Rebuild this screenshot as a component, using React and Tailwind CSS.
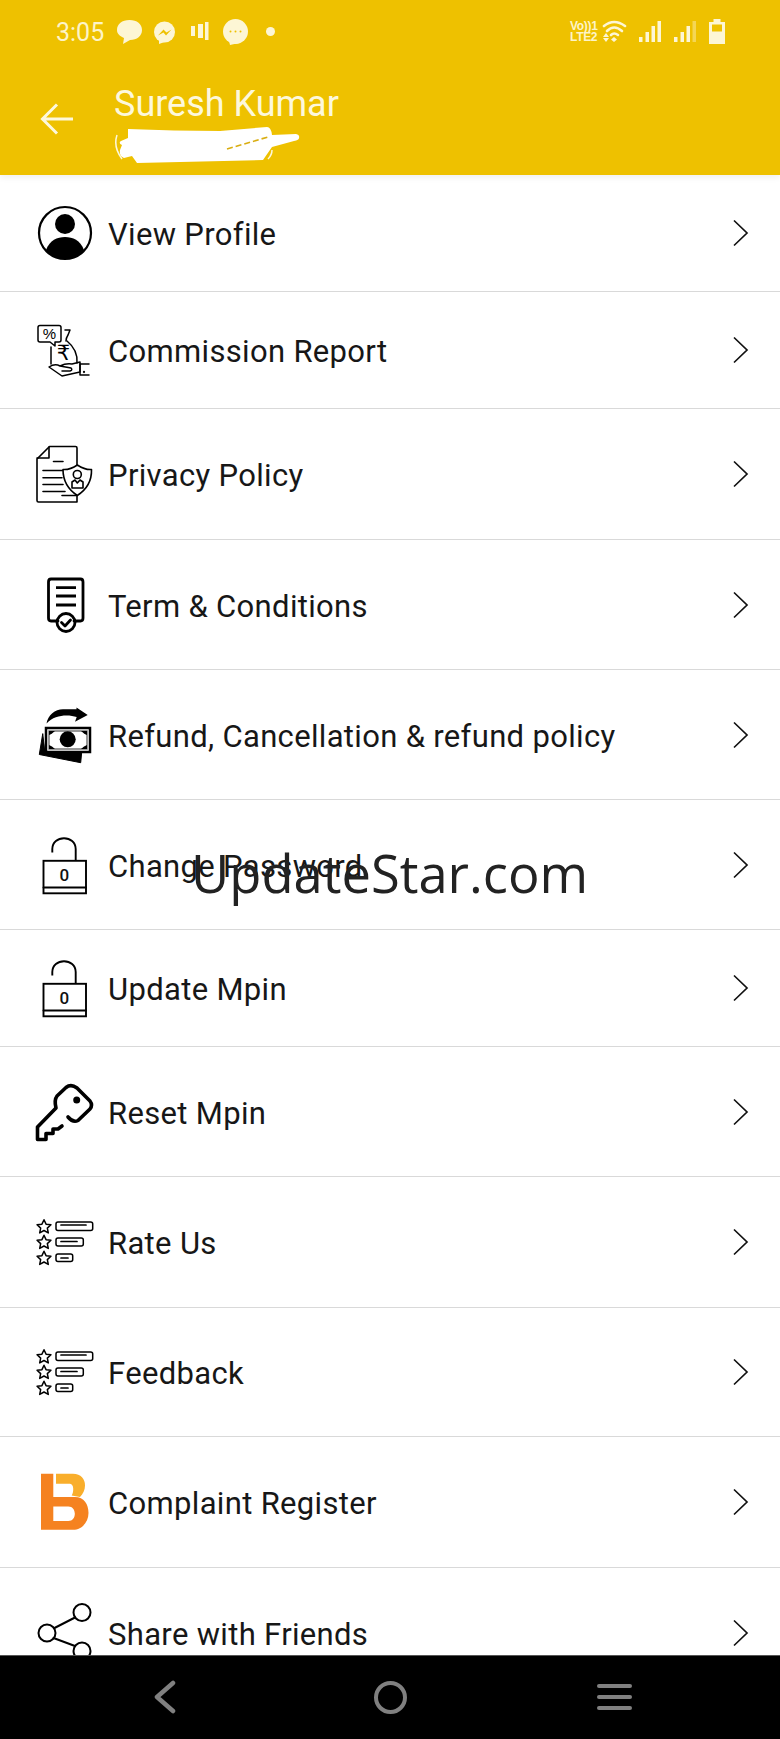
import React from "react";

const Icon = ({ children }) => (
  <svg width="60" height="60" viewBox="0 0 60 60" fill="none" stroke="#000" strokeLinecap="round" strokeLinejoin="round" className="shrink-0 overflow-visible">
    {children}
  </svg>
);

const Profile = () => (
  <Icon>
    <circle cx="30" cy="30" r="26" strokeWidth="2.2" />
    <circle cx="30" cy="21" r="10" fill="#000" stroke="none" />
    <path d="M11 47 C15 37 22 34 30 34 C38 34 45 37 49 47 C44 53 37 56 30 56 C23 56 16 53 11 47 Z" fill="#000" stroke="none" />
  </Icon>
);

const Commission = () => (
  <Icon>
    <g strokeWidth="1.5">
      <path d="M5 5.5 H24 Q26 5.5 26 7.5 V20 Q26 22 24 22 H20 V26 L15 22 H5 Q3 22 3 20 V7.5 Q3 5.5 5 5.5 Z" />
      <text x="14.5" y="19" fontSize="15" fontFamily="Liberation Sans" fill="#000" stroke="none" textAnchor="middle">%</text>
      <path d="M30 10 H35 L33 15 Q31 18 31 21" />
      <path d="M16 27 V44 M32 21 Q43 30 42 43" />
      <text x="28.5" y="40" fontSize="21" fontFamily="DejaVu Sans" fill="#000" stroke="none" textAnchor="middle">₹</text>
      <path d="M25 46 Q31 43 37 44 L45 42 V52 L27 56 L14 47 Q20 43 25 46 L36 48 Q38 50 35 51 H27" />
      <path d="M45 44 H54 M45 55 H54 M45 44 V55" />
      <circle cx="49" cy="52" r="0.4" />
    </g>
  </Icon>
);

const Privacy = () => (
  <Icon>
    <g strokeWidth="1.6">
      <path d="M27 51.5 H42 V58 H3.5 Q2 58 2 56.5 V15 L14.5 2.5 H40.5 Q42 2.5 42 4 V21" />
      <path d="M14 3 V14 H2" />
      <path d="M18.5 17.5 H28 M8 26.5 H28 M8 33.8 H27 M8 40.5 H28 M8 47.5 H30" />
      <path d="M42.3 21 Q50 26 56.5 25.5 Q57 42 42.3 51.5 Q28 42 28 25.5 Q35 26 42.3 21 Z" fill="#fff" />
      <circle cx="42.3" cy="30.5" r="4" />
      <path d="M37 44 V38 L40 36 L42.3 39 L45 36 L48 38 V44 Z" />
    </g>
  </Icon>
);

const Term = () => (
  <Icon>
    <path d="M23 46 H16 Q13.5 46 13.5 43 V7 Q13.5 4 16 4 H45.5 Q48 4 48 7 V43 Q48 46 45.5 46 H39" strokeWidth="2.8" />
    <path d="M21 12.7 H41 M21 21 H41 M21 30 H41" strokeWidth="2.8" strokeLinecap="butt" />
    <circle cx="31" cy="47.5" r="9" strokeWidth="2.8" />
    <path d="M26.5 47.5 L30 51 L35.5 45" strokeWidth="2.8" />
  </Icon>
);

const Refund = () => (
  <Icon>
    <path d="M7.7 29 L4.3 49.5 L45.7 57.7 L46.7 47 L10 45.5 Z" fill="#000" stroke="#000" strokeWidth="1" />
    <rect x="11" y="23" width="44" height="24" fill="#fff" strokeWidth="2.5" strokeLinejoin="miter" />
    <rect x="14" y="26" width="38" height="18" fill="none" stroke="#777" strokeWidth="1.5" strokeLinejoin="miter" />
    <path d="M14 26 H20 Q17 29 14 30 Z M52 26 H46 Q49 29 52 30 Z M14 44 H20 Q17 41 14 40 Z M52 44 H46 Q49 41 52 40 Z" fill="#000" stroke="none" />
    <circle cx="32.7" cy="34.3" r="8" fill="#000" stroke="none" />
    <path d="M11.5 18.5 C13 10 20 4.5 28 4.3 L41.5 4.3 L41.5 2.5 L52.7 10 L40 16.7 L41.7 12 C34 9.5 20 9 11.5 18.5 Z" fill="#000" stroke="none" />
  </Icon>
);

const Lock = () => (
  <Icon>
    <path d="M17.3 17.5 V14 C17.3 7 23 3.2 29 3.2 C35 3.2 40.7 7 40.7 14 V25.8" strokeWidth="1.9" strokeLinecap="butt" />
    <rect x="8.5" y="25.8" width="42.5" height="32.5" strokeWidth="1.9" strokeLinejoin="miter" />
    <path d="M8.5 52.5 H51" strokeWidth="1.9" />
    <text x="29.3" y="46" fontSize="17" fontFamily="Roboto" fontWeight="500" fill="#111" stroke="none" textAnchor="middle">0</text>
  </Icon>
);

const Key = () => (
  <Icon>
    <path d="M33 35 Q38 41 43 38.5 L55 27 Q58 23 55 19 L42 6 Q36 1.5 31 5.5 L22 14 Q19 18 21 26 L2.5 45 V57.5 H11 V51.5 H18 V47 H23 L27 44" strokeWidth="3.6" />
    <circle cx="41.7" cy="18" r="3.5" fill="#000" stroke="none" />
  </Icon>
);

const starPath = (cx, cy, r = 7.3) => {
  const pts = [];
  for (let i = 0; i < 10; i++) {
    const a = -Math.PI / 2 + (i * Math.PI) / 5;
    const rr = i % 2 ? r * 0.48 : r;
    pts.push(`${(cx + rr * Math.cos(a)).toFixed(2)} ${(cy + rr * Math.sin(a)).toFixed(2)}`);
  }
  return "M" + pts.join(" L") + " Z";
};

const Stars = () => (
  <Icon>
    <g strokeWidth="1.5">
      <path d={starPath(9, 15)} />
      <path d={starPath(9, 30.5)} />
      <path d={starPath(9, 46.5)} />
      <rect x="21" y="10" width="36.7" height="8.5" rx="2" />
      <rect x="21" y="26" width="27.3" height="8" rx="2" />
      <rect x="21" y="42" width="16.7" height="7.5" rx="2" />
      <path d="M26 13 H51 M26 29.5 H42 M26 46 H33" strokeWidth="1.7" />
    </g>
  </Icon>
);

const Logo = () => (
  <Icon>
    <path d="M21 1.8 H38 C46 1.8 50 7 50 13.5 C50 18 48 22 45 25 L36.7 23.5 C39 20 39 12 35 11.8 H21 Z" fill="#f9ae2b" stroke="none" />
    <path d="M6 1.8 H18.3 V25 H40 C49 25 53.5 32 53.5 41 C53.5 50 47 57.8 38 57.8 H6 Z M18.3 34.5 V49 H33.3 C42 49 42 34.5 33.3 34.5 Z" fill="#f58220" fillRule="evenodd" stroke="none" />
  </Icon>
);

const Share = () => (
  <Icon>
    <g strokeWidth="2">
      <circle cx="47" cy="9.5" r="8.5" />
      <circle cx="12" cy="30" r="8.5" />
      <circle cx="47" cy="48" r="8.5" />
      <path d="M19.5 25 L40 14.5 M18.5 35 L40 43" />
    </g>
  </Icon>
);

const Chevron = () => (
  <svg width="18" height="28" viewBox="0 0 18 28" fill="none" stroke="#111" strokeWidth="1.7" className="shrink-0">
    <path d="M2 1.5 L15 14 L2 26.5" />
  </svg>
);

const rows = [
  { label: "View Profile", h: "h-[117px]", Ic: Profile },
  { label: "Commission Report", h: "h-[117px]", Ic: Commission },
  { label: "Privacy Policy", h: "h-[131px]", Ic: Privacy },
  { label: "Term & Conditions", h: "h-[130px]", Ic: Term },
  { label: "Refund, Cancellation & refund policy", h: "h-[130px]", Ic: Refund },
  { label: "Change Password", h: "h-[130px]", Ic: Lock },
  { label: "Update Mpin", h: "h-[117px]", Ic: Lock },
  { label: "Reset Mpin", h: "h-[130px]", Ic: Key },
  { label: "Rate Us", h: "h-[131px]", Ic: Stars },
  { label: "Feedback", h: "h-[129px]", Ic: Stars },
  { label: "Complaint Register", h: "h-[131px]", Ic: Logo },
  { label: "Share with Friends", h: "h-[130px]", Ic: Share, last: true },
];

const StatusBar = () => (
  <div className="flex h-[64px] items-center pl-[56px] pr-[55px] text-[#fdf4c8]">
    <span className="text-[25px] leading-none font-['Roboto',sans-serif]">3:05</span>
    <svg width="160" height="26" viewBox="0 0 160 26" fill="#fdf6d5" className="ml-[13px]">
      <path d="M12.5 1 C20 1 25 5 25 11 C25 17 20 21 13 21 L6 25 L7 19 C3 17 0 15 0 11 C0 5 5 1 12.5 1 Z" />
      <circle cx="47.5" cy="13" r="10.5" />
      <path d="M47.5 23 L42 25 L42 19 Z" />
      <path d="M41 16.5 L46.5 10.5 L49.5 13.5 L54.5 10.5 L49 16.5 L46.5 13.5 Z" fill="#eec100" />
      <rect x="74" y="7" width="4" height="10" />
      <rect x="81" y="5" width="5" height="14" />
      <rect x="88" y="3" width="3.5" height="18" />
      <circle cx="118.5" cy="12.5" r="12.5" />
      <path d="M112 22 L122 24 L113 26 Z" />
      <circle cx="113.5" cy="12.5" r="1" fill="#eec100" />
      <circle cx="118.5" cy="12.5" r="1" fill="#eec100" />
      <circle cx="123.5" cy="12.5" r="1" fill="#eec100" />
      <circle cx="153.5" cy="12.5" r="4.5" />
    </svg>
    <div className="ml-auto flex items-center">
      <div className="flex w-[30px] flex-col text-[12px] font-bold leading-[11px] font-['Liberation_Sans',sans-serif] tracking-[-0.3px] whitespace-nowrap">
        <span>Vo))1</span>
        <span>LTE2</span>
      </div>
      <svg width="125" height="26" viewBox="0 0 125 26" fill="none">
        <g stroke="#fdf6d5" strokeWidth="2.6" strokeLinecap="round">
          <path d="M4 7 Q14 -1 25 7" />
          <path d="M7 12 Q14 5 22 12" />
          <path d="M11 16 Q14 13 18 16" />
        </g>
        <g fill="#fdf6d5">
          <path d="M14 18 L17 20.5 L14 23 L11 20.5 Z" />
          <path d="M6 14 L9 18 H3 Z M6 23 L9 19 H3 Z" />
          <rect x="39" y="18" width="3.5" height="5" />
          <rect x="45.5" y="13" width="3.5" height="10" />
          <rect x="51.5" y="7" width="3.5" height="16" />
          <rect x="57.5" y="2" width="3.5" height="21" />
          <rect x="74" y="18" width="3.5" height="5" />
          <rect x="80.5" y="13" width="3.5" height="10" />
          <rect x="86.5" y="7" width="3.5" height="16" />
          <rect x="92.5" y="2" width="3.5" height="21" opacity="0.4" />
          <path d="M109 3 H113.5 V0 H120.5 V3 H125 V25 H109 Z" />
        </g>
        <rect x="112" y="5.5" width="10" height="7" fill="#eec100" />
      </svg>
    </div>
  </div>
);

export default function App() {
  return (
    <div className="relative flex h-[1739px] w-[780px] flex-col overflow-hidden bg-white font-['Roboto',sans-serif]">
      <header className="h-[175px] shrink-0 bg-[#eec100] shadow-[0_3px_6px_rgba(0,0,0,0.06)] relative z-10">
        <StatusBar />
        <div className="flex items-start pl-[40px] pt-[20px]">
          <svg width="34" height="34" viewBox="0 0 34 34" fill="none" stroke="#fdf8dc" strokeWidth="3" className="mt-[18px] shrink-0">
            <path d="M33 17 H3 M17 2.5 L2.5 17 L17 31.5" />
          </svg>
          <div className="ml-[40px] flex flex-col">
            <span className="text-[36px] leading-[40px] text-[#fdf8dc] whitespace-nowrap">Suresh Kumar</span>
            <svg width="190" height="40" viewBox="0 0 190 40" className="mt-[2px]">
              <path d="M3 9 Q-1 21 8 33" fill="none" stroke="#fdf8dc" strokeWidth="1.5" />
              <path d="M158 24 Q158 29 154 33" fill="none" stroke="#fdf8dc" strokeWidth="1.5" />
              <path d="M14 3 Q60 5 106 5 L153 1 Q157 1 158 9 L182 8 Q186 9 185 12 Q185 14 180 15 L158 21 L149 34 L23 37 L18 30 L10 32 Q5 30 6 24 L8 19 Q4 17 7 15 L14 12 Z" fill="#fff" />
              <path d="M113 23 L154 11" stroke="#d9ad10" strokeWidth="1.6" strokeDasharray="6 3" fill="none" />
            </svg>
          </div>
        </div>
      </header>
      <main className="flex-1 overflow-hidden">
        {rows.map(({ label, h, Ic, last }) => (
          <div key={label} className={`flex items-center pl-[35px] pr-[30px] ${h} ${last ? "" : "border-b border-[#d9d9d9]"}`}>
            <Ic />
            <span className="ml-[13px] mt-[3px] flex-1 text-[31px] leading-none tracking-[0.33px] text-[#171717] whitespace-nowrap">{label}</span>
            <Chevron />
          </div>
        ))}
      </main>
      <nav className="flex h-[84px] shrink-0 items-center bg-black pb-[1px] border-t border-[#555]">
        <div className="flex w-full items-center">
          <svg width="24" height="34" viewBox="0 0 24 34" fill="none" stroke="#808080" strokeWidth="4.5" strokeLinecap="round" strokeLinejoin="round" className="ml-[153px]">
            <path d="M20 3 L4 17 L20 31" />
          </svg>
          <div className="ml-[197px] h-[33px] w-[33px] rounded-full border-[4.5px] border-[#808080]" />
          <div className="ml-[190px] flex w-[35px] flex-col gap-[6.5px]">
            <div className="h-[4.5px] rounded-full bg-[#808080]" />
            <div className="h-[4.5px] rounded-full bg-[#808080]" />
            <div className="h-[4.5px] rounded-full bg-[#808080]" />
          </div>
        </div>
      </nav>
      <div className="absolute left-[191px] top-[838px] z-20 text-[52.5px] leading-[70px] text-[#222] font-['Open_Sans',sans-serif] whitespace-nowrap">UpdateStar.com</div>
    </div>
  );
}
